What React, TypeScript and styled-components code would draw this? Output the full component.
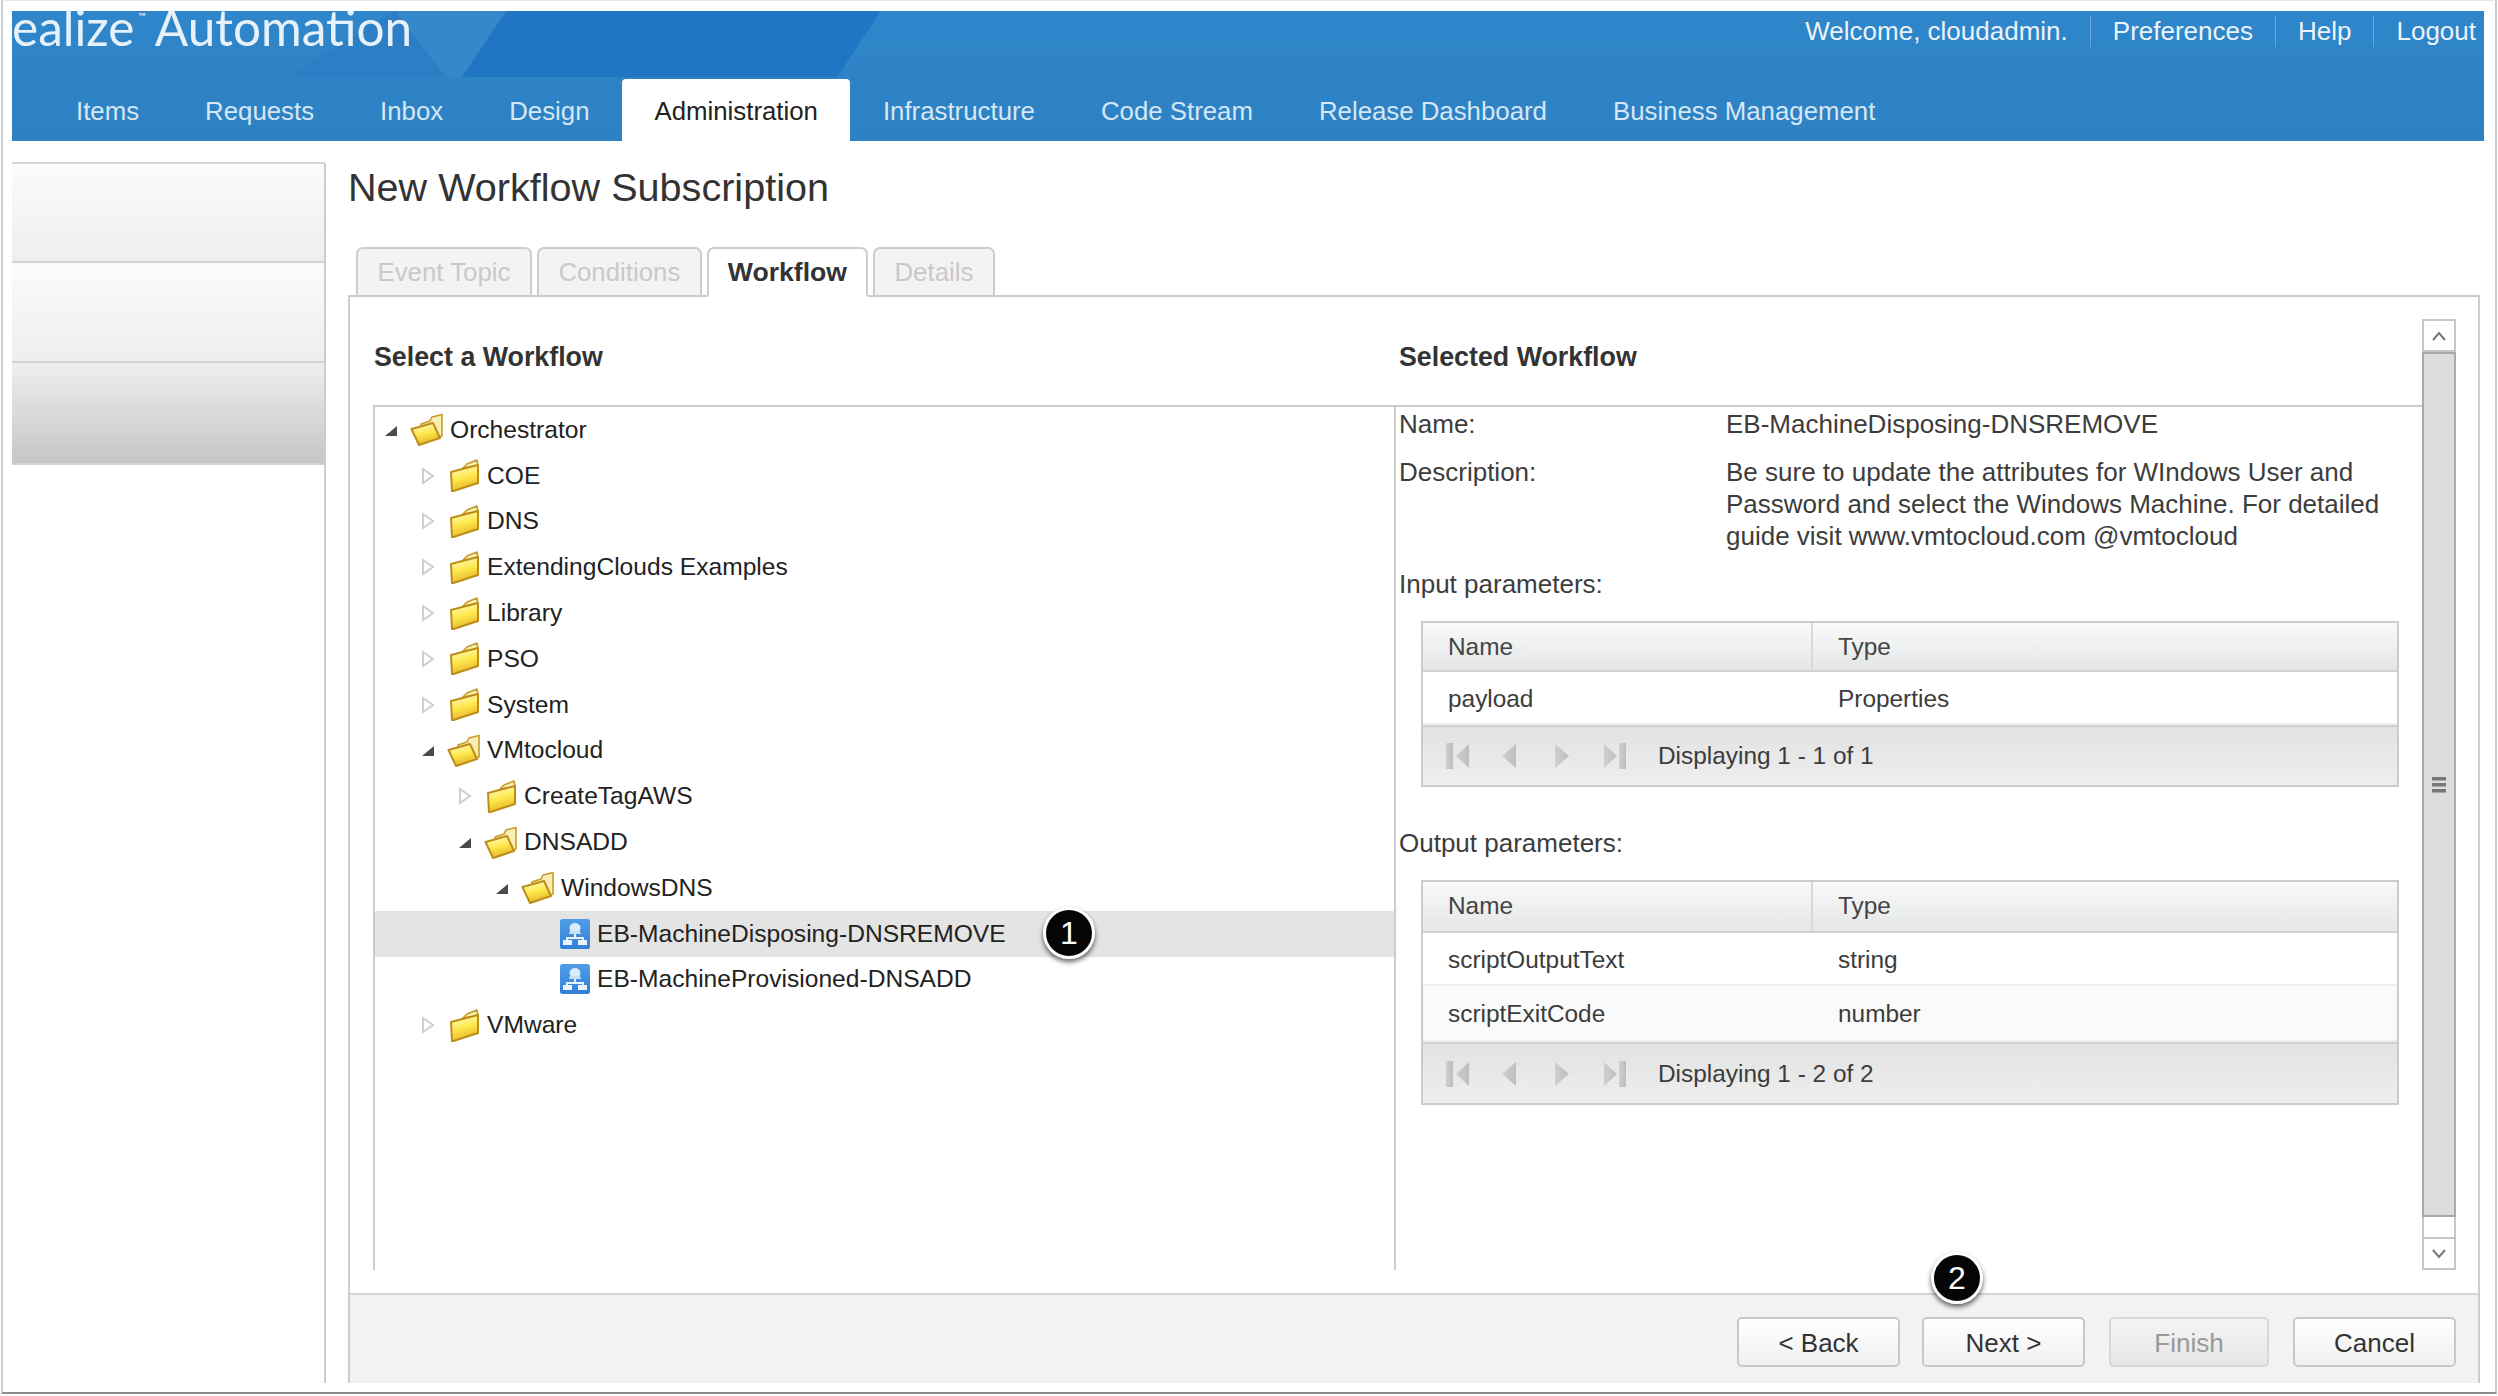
import React from "react";
import styled, { createGlobalStyle } from "styled-components";

const Global = createGlobalStyle`
  html, body { margin: 0; padding: 0; background: #fff; }
  body { width: 2498px; height: 1396px; overflow: hidden; font-family: "Liberation Sans", Arial, sans-serif; color: #333; }
  * { box-sizing: border-box; }
`;

const Frame = styled.div`
  margin-left: 1px; width: 2496px; height: 1394px;
  border-top: 1px solid #e8e8e8; border-left: 2px solid #ccc; border-right: 2px solid #ccc; border-bottom: 2px solid #8c8c8c;
  padding: 10px 11px 9px 9px; display: flex; flex-direction: column;
`;

const Header = styled.header`
  position: relative; flex: none; height: 130px; overflow: hidden;
  background: linear-gradient(#2f86ca, #2d81c3);
  display: flex; flex-direction: column; justify-content: flex-end;
`;
const Art = styled.svg`position: absolute; left: 0; top: 0; width: 900px; height: 66px;`;
const Logo = styled.div`
  position: absolute; left: 0; top: -25px; white-space: nowrap; color: #e6f1fa;
  font-family: "Lato", "Open Sans", sans-serif; font-weight: 400; font-size: 49.5px; line-height: 60px;
  sup { font-size: 10px; vertical-align: 26px; margin: 0 9px 0 4px; }
`;
const UserMenu = styled.div`
  position: absolute; right: 8px; top: 4px; display: flex; align-items: center; height: 32px; font-size: 26px; color: #eaf3fa;
`;
const UserItem = styled.span`
  padding: 0 22px; line-height: 32px; border-right: 1px solid #6aa7d8;
  &:last-child { border-right: 0; padding-right: 0; }
  &:first-child { padding-left: 0; }
`;
const Nav = styled.nav`display: flex; height: 62px; padding-left: 31px;`;
const NavItem = styled.div<{ $active?: boolean }>`
  padding: 0 33px; height: 62px; line-height: 65px; font-size: 25.8px;
  color: ${p => (p.$active ? "#222" : "#d5e6f4")};
  background: ${p => (p.$active ? "#fff" : "transparent")};
  border-radius: ${p => (p.$active ? "4px 4px 0 0" : "0")};
  ${p => p.$active && "padding: 0 32px;"}
`;

const Main = styled.main`flex: 1; display: flex; min-height: 0;`;
const Sidebar = styled.aside`
  flex: none; width: 314px; margin-top: 21px; border-right: 2px solid #ccc; border-top: 2px solid #d4d4d4; border-top-right-radius: 3px;
`;
const SideRow = styled.div<{ $h: number; $dark?: boolean }>`
  height: ${p => p.$h}px;
  background: ${p => (p.$dark ? "linear-gradient(#eeeeee, #c6c6c6)" : "linear-gradient(#fbfbfb, #eeeeee)")};
  border-bottom: 2px solid #d2d2d2;
`;
const Content = styled.section`flex: 1; min-width: 0; margin-left: 22px; margin-right: 4px; display: flex; flex-direction: column;`;
const Title = styled.h1`
  margin: 23px 0 37px 0; height: 46px; line-height: 46px; font-size: 39.6px; font-weight: 400; color: #333; white-space: nowrap;
`;
const Tabs = styled.div`display: flex; gap: 5px; padding-left: 8px; height: 50px; margin-bottom: -2px; position: relative; z-index: 1;`;
const Tab = styled.div<{ $active?: boolean }>`
  height: 50px; padding: 0 ${p => (p.$active ? "19px" : "19.5px")}; line-height: 46px;
  font-size: ${p => (p.$active ? "26.6px" : "25.8px")};
  border: 2px solid #ccc; border-radius: 7px 7px 0 0;
  color: ${p => (p.$active ? "#333" : "#c9c9c9")};
  font-weight: ${p => (p.$active ? 700 : 400)};
  background: ${p => (p.$active ? "#fff" : "#f3f3f3")};
  ${p => p.$active && "border-bottom-color: #fff;"}
`;
const Panel = styled.div`flex: 1; min-height: 0; border: 2px solid #ccc; border-bottom: 0; display: flex; flex-direction: column;`;
const PanelBody = styled.div`flex: 1; min-height: 0; display: flex; padding: 22px 22px 23px 23px;`;
const Workspace = styled.div`flex: 1; min-width: 0; display: flex; flex-direction: column;`;
const Heads = styled.div`display: grid; grid-template-columns: 1025px 1fr; height: 88px; padding: 0 0 10px 1px; align-items: center; border-bottom: 2px solid #ccc;`;
const Heading = styled.h2`margin: 0; font-size: 26.8px; font-weight: 700; color: #333; line-height: 32px;`;
const Columns = styled.div`flex: 1; min-height: 0; display: flex;`;
const TreePane = styled.div`flex: none; width: 1023px; border-left: 2px solid #ccc; border-right: 2px solid #ccc;`;
const TreeRow = styled.div<{ $level: number; $selected?: boolean }>`
  position: relative; height: 45.8px; display: flex; align-items: center; white-space: nowrap; font-size: 24.6px; color: #222;
  padding-left: ${p => 9 + p.$level * 37}px;
  background: ${p => (p.$selected ? "#e4e4e4" : "transparent")};
`;
const Arrow = styled.svg`flex: none; width: 14px; height: 18px; margin-right: 12px;`;
const NodeIcon = styled.svg`flex: none; width: 33px; height: 33px; margin-right: 7px;`;
const LeafGap = styled.span`flex: none; width: 28px;`;
const FlowIcon = styled.svg`flex: none; width: 30px; height: 30px; margin-right: 7px;`;
const Badge = styled.span`
  position: absolute; display: flex; align-items: center; justify-content: center;
  width: 52px; height: 52px; border-radius: 50%; background: #050505; color: #fff; font-size: 32px; line-height: 1;
  border: 3px solid #fff; box-shadow: 0 3px 5px rgba(0,0,0,.6);
`;
const TreeBadge = styled(Badge)`left: 668px; top: -4px;`;
const NextBadge = styled(Badge)`left: 7px; top: -67px;`;

const Detail = styled.div`flex: 1; min-width: 0; padding: 1px 0 0 3px; font-size: 26px; color: #3c3c3c;`;
const Field = styled.div<{ $gap?: number }>`display: grid; grid-template-columns: 327px 1fr; line-height: 32px; margin-top: ${p => p.$gap ?? 0}px; white-space: nowrap;`;
const Caption = styled.div<{ $top: number }>`line-height: 32px; margin-top: ${p => p.$top}px;`;
const Grid = styled.div<{ $top: number }>`margin: ${p => p.$top}px 23px 0 22px; border: 2px solid #ccc; font-size: 24.4px;`;
const GridHead = styled.div<{ $h: number }>`
  display: grid; grid-template-columns: 388px 1fr; height: ${p => p.$h}px;
  background: linear-gradient(#f9f9f9, #e4e6e7); border-bottom: 2px solid #d2d2d2; color: #444;
`;
const HeadCell = styled.div`padding-left: 25px; line-height: 48px; & + & { border-left: 2px solid #d8d8d8; padding-left: 25px; }`;
const GridRow = styled.div<{ $h: number; $alt?: boolean }>`
  display: grid; grid-template-columns: 388px 1fr; height: ${p => p.$h}px; align-items: center;
  background: ${p => (p.$alt ? "#fafafa" : "#fff")}; border-bottom: 2px solid #eeeeee;
`;
const RowCell = styled.div`padding: 2px 0 0 25px; & + & { padding-left: 27px; }`;
const Toolbar = styled.div<{ $h: number }>`
  display: flex; align-items: center; height: ${p => p.$h}px; padding-left: 22px;
  background: linear-gradient(#e2e2e2, #eeeeee); border-top: 2px solid #d0d0d0;
`;
const PagerIcons = styled.svg`flex: none; width: 182px; height: 26px; margin-right: 31px;`;

const Scrollbar = styled.div`flex: none; width: 34px; display: flex; flex-direction: column;`;
const ScrollBtn = styled.div`
  height: 33px; border: 2px solid #c6c6c6; background: #fff;
  display: flex; align-items: center; justify-content: center;
`;
const Thumb = styled.div`
  flex: 1; background: #dcdcdc; border: 2px solid #a9a9a9; display: flex; align-items: center; justify-content: center;
`;
const Grip = styled.svg`width: 14px; height: 16px;`;
const Track = styled.div`height: 20px; border-left: 2px solid #c6c6c6; border-right: 2px solid #c6c6c6;`;

const Footer = styled.footer`
  flex: none; height: 90px; background: #f2f2f2; border-top: 2px solid #d4d4d4;
  display: flex; justify-content: flex-end; gap: 24px; padding: 22px 22px 0 0;
`;
const Btn = styled.div<{ $disabled?: boolean }>`
  position: relative; width: ${p => (p.$disabled ? "160px" : "163px")}; height: 50px; border-radius: 5px; line-height: 48px; text-align: center; font-size: 26px;
  border: 2px solid ${p => (p.$disabled ? "#d8d8d8" : "#c8c8c8")};
  color: ${p => (p.$disabled ? "#999" : "#333")};
  background: ${p => (p.$disabled ? "linear-gradient(#f4f4f4, #e6e6e6)" : "linear-gradient(#ffffff, #f0f0f0)")};
  &:first-child { margin-right: -2px; }
`;

const Folder = ({ open }: { open?: boolean }) => (
  <NodeIcon viewBox="0 0 33 33">
    <defs>
      <linearGradient id="fo" x1="0.2" y1="0" x2="0.5" y2="1">
        <stop offset="0" stopColor="#fffbc8" />
        <stop offset=".5" stopColor="#ffe94e" />
        <stop offset="1" stopColor="#e2b024" />
      </linearGradient>
    </defs>
    {open ? (
      <>
        <path d="M11 11 L20 8 L22 4 L32 1.5 L32 23 L12 30 Z" fill="#f8eeb4" stroke="#c99c28" strokeWidth="1.6" strokeLinejoin="round" />
        <path d="M1.5 16 L23 10 L30 25 L9 32 Z" fill="url(#fo)" stroke="#bd8d1a" strokeWidth="2" strokeLinejoin="round" />
      </>
    ) : (
      <>
        <path d="M16 9 L20 5 L30 1 L31 7 Z" fill="#f8eeb4" stroke="#c99c28" strokeWidth="1.6" strokeLinejoin="round" />
        <path d="M4 13 L23 8 L31 6 L31 24 L5 32.5 Z" fill="url(#fo)" stroke="#bd8d1a" strokeWidth="2" strokeLinejoin="round" />
      </>
    )}
  </NodeIcon>
);

const Expander = ({ open }: { open?: boolean }) => (
  <Arrow viewBox="0 0 14 18">
    {open ? (
      <path d="M13 5 V15 H1 Z" fill="#4a4a4a" />
    ) : (
      <path d="M2 2 L12 9 L2 16 Z" fill="#fff" stroke="#cfcfcf" strokeWidth="2" />
    )}
  </Arrow>
);

const Flow = () => (
  <FlowIcon viewBox="0 0 30 30">
    <defs>
      <linearGradient id="fl" x1="0" y1="0" x2="0" y2="1">
        <stop offset="0" stopColor="#4f9ce6" />
        <stop offset="1" stopColor="#337fd8" />
      </linearGradient>
    </defs>
    <rect width="30" height="30" rx="2.5" fill="url(#fl)" />
    <ellipse cx="15" cy="9" rx="5.5" ry="5" fill="#d8ecfb" />
    <path d="M10 12 h10 l1 3 h-12 Z" fill="#c4e0f6" />
    <path d="M14 15 h2 v3 h8 v3 h-2 v-1 h-14 v1 h-2 v-3 h8 Z" fill="#e6f3fc" />
    <rect x="3" y="21" width="9" height="5" fill="#e6f3fc" />
    <rect x="18" y="21" width="9" height="5" fill="#e6f3fc" />
  </FlowIcon>
);

const Pager = () => (
  <PagerIcons viewBox="0 0 182 26">
    <defs>
      <linearGradient id="pg" x1="0" y1="0" x2="1" y2="0">
        <stop offset="0" stopColor="#cfcfcf" />
        <stop offset="1" stopColor="#bdbdbd" />
      </linearGradient>
    </defs>
    <rect x="1" y="0" width="7" height="26" fill="url(#pg)" />
    <path d="M24 1 V25 L11 13 Z" fill="url(#pg)" />
    <path d="M71 1 V25 L57 13 Z" fill="url(#pg)" />
    <path d="M110 1 V25 L124 13 Z" fill="url(#pg)" />
    <path d="M159 1 V25 L172 13 Z" fill="url(#pg)" />
    <rect x="174" y="0" width="7" height="26" fill="url(#pg)" />
  </PagerIcons>
);

const tree: { label: string; level: number; kind: "open" | "closed" | "flow"; selected?: boolean }[] = [
  { label: "Orchestrator", level: 0, kind: "open" },
  { label: "COE", level: 1, kind: "closed" },
  { label: "DNS", level: 1, kind: "closed" },
  { label: "ExtendingClouds Examples", level: 1, kind: "closed" },
  { label: "Library", level: 1, kind: "closed" },
  { label: "PSO", level: 1, kind: "closed" },
  { label: "System", level: 1, kind: "closed" },
  { label: "VMtocloud", level: 1, kind: "open" },
  { label: "CreateTagAWS", level: 2, kind: "closed" },
  { label: "DNSADD", level: 2, kind: "open" },
  { label: "WindowsDNS", level: 3, kind: "open" },
  { label: "EB-MachineDisposing-DNSREMOVE", level: 4, kind: "flow", selected: true },
  { label: "EB-MachineProvisioned-DNSADD", level: 4, kind: "flow" },
  { label: "VMware", level: 1, kind: "closed" },
];

const navItems = ["Items", "Requests", "Inbox", "Design", "Administration", "Infrastructure", "Code Stream", "Release Dashboard", "Business Management"];

export default function App() {
  return (
    <>
      <Global />
      <Frame>
        <Header>
          <Art viewBox="0 0 900 66">
            <path d="M383 0 L494 0 L450 66 L434 66 Z" fill="#3688cd" />
            <path d="M383 0 L434 66 L275 66 Z" fill="#2c7fc5" />
            <path d="M494 0 H869 L825 66 H450 Z" fill="#2176c4" />
          </Art>
          <Logo>ealize<sup>™</sup>Automation</Logo>
          <UserMenu>
            <UserItem>Welcome, cloudadmin.</UserItem>
            <UserItem>Preferences</UserItem>
            <UserItem>Help</UserItem>
            <UserItem>Logout</UserItem>
          </UserMenu>
          <Nav>
            {navItems.map(n => (
              <NavItem key={n} $active={n === "Administration"}>{n}</NavItem>
            ))}
          </Nav>
        </Header>
        <Main>
          <Sidebar>
            <SideRow $h={99} />
            <SideRow $h={100} />
            <SideRow $h={102} $dark />
          </Sidebar>
          <Content>
            <Title>New Workflow Subscription</Title>
            <Tabs>
              <Tab>Event Topic</Tab>
              <Tab>Conditions</Tab>
              <Tab $active>Workflow</Tab>
              <Tab>Details</Tab>
            </Tabs>
            <Panel>
              <PanelBody>
                <Workspace>
                  <Heads>
                    <Heading>Select a Workflow</Heading>
                    <Heading>Selected Workflow</Heading>
                  </Heads>
                  <Columns>
                    <TreePane>
                      {tree.map(t => (
                        <TreeRow key={t.label} $level={t.level} $selected={t.selected}>
                          {t.kind === "flow" ? (
                            <>
                              <LeafGap />
                              <Flow />
                            </>
                          ) : (
                            <>
                              <Expander open={t.kind === "open"} />
                              <Folder open={t.kind === "open"} />
                            </>
                          )}
                          {t.label}
                          {t.selected && <TreeBadge>1</TreeBadge>}
                        </TreeRow>
                      ))}
                    </TreePane>
                    <Detail>
                      <Field>
                        <div>Name:</div>
                        <div>EB-MachineDisposing-DNSREMOVE</div>
                      </Field>
                      <Field $gap={16}>
                        <div>Description:</div>
                        <div>
                          Be sure to update the attributes for WIndows User and<br />
                          Password and select the Windows Machine. For detailed<br />
                          guide visit www.vmtocloud.com @vmtocloud
                        </div>
                      </Field>
                      <Caption $top={16}>Input parameters:</Caption>
                      <Grid $top={21}>
                        <GridHead $h={49}>
                          <HeadCell>Name</HeadCell>
                          <HeadCell>Type</HeadCell>
                        </GridHead>
                        <GridRow $h={53}>
                          <RowCell>payload</RowCell>
                          <RowCell>Properties</RowCell>
                        </GridRow>
                        <Toolbar $h={60}>
                          <Pager />
                          Displaying 1 - 1 of 1
                        </Toolbar>
                      </Grid>
                      <Caption $top={40}>Output parameters:</Caption>
                      <Grid $top={21}>
                        <GridHead $h={51}>
                          <HeadCell>Name</HeadCell>
                          <HeadCell>Type</HeadCell>
                        </GridHead>
                        <GridRow $h={53}>
                          <RowCell>scriptOutputText</RowCell>
                          <RowCell>string</RowCell>
                        </GridRow>
                        <GridRow $h={56} $alt>
                          <RowCell>scriptExitCode</RowCell>
                          <RowCell>number</RowCell>
                        </GridRow>
                        <Toolbar $h={61}>
                          <Pager />
                          Displaying 1 - 2 of 2
                        </Toolbar>
                      </Grid>
                    </Detail>
                  </Columns>
                </Workspace>
                <Scrollbar>
                  <ScrollBtn>
                    <svg width="16" height="12" viewBox="0 0 16 12"><path d="M2 10 L8 3 L14 10" fill="none" stroke="#777" strokeWidth="2" /></svg>
                  </ScrollBtn>
                  <Thumb>
                    <Grip viewBox="0 0 14 16">
                      <rect y="0" width="14" height="3.5" fill="#777" />
                      <rect y="6" width="14" height="3.5" fill="#777" />
                      <rect y="12" width="14" height="3.5" fill="#777" />
                    </Grip>
                  </Thumb>
                  <Track />
                  <ScrollBtn>
                    <svg width="16" height="12" viewBox="0 0 16 12"><path d="M2 2 L8 9 L14 2" fill="none" stroke="#777" strokeWidth="2" /></svg>
                  </ScrollBtn>
                </Scrollbar>
              </PanelBody>
              <Footer>
                <Btn>&lt; Back</Btn>
                <Btn>Next &gt;<NextBadge>2</NextBadge></Btn>
                <Btn $disabled>Finish</Btn>
                <Btn>Cancel</Btn>
              </Footer>
            </Panel>
          </Content>
        </Main>
      </Frame>
    </>
  );
}
